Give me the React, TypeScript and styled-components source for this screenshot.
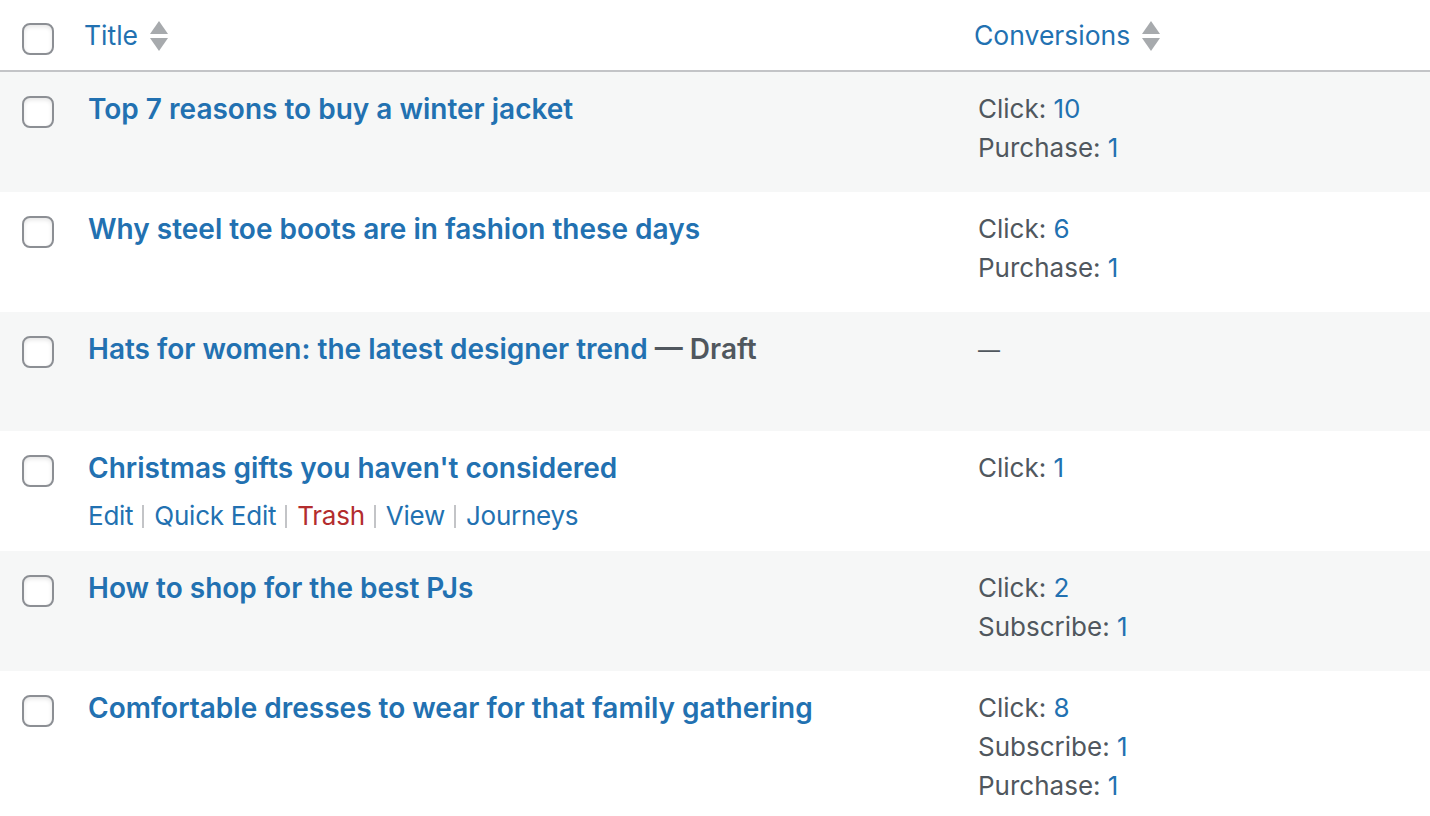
import React from 'react';
import styled, { createGlobalStyle } from 'styled-components';

const GlobalStyle = createGlobalStyle`
  html, body {
    margin: 0;
    padding: 0;
    background: #ffffff;
  }
  body {
    font-family: Inter, "Noto Sans", "Liberation Sans", sans-serif;
    color: #3c434a;
  }
`;

type Post = {
  title: string;
  draft?: boolean;
  hovered?: boolean;
  stats: { label: string; value: number }[];
};

const posts: Post[] = [
  {
    title: 'Top 7 reasons to buy a winter jacket',
    stats: [
      { label: 'Click', value: 10 },
      { label: 'Purchase', value: 1 },
    ],
  },
  {
    title: 'Why steel toe boots are in fashion these days',
    stats: [
      { label: 'Click', value: 6 },
      { label: 'Purchase', value: 1 },
    ],
  },
  { title: 'Hats for women: the latest designer trend', draft: true, stats: [] },
  {
    title: "Christmas gifts you haven't considered",
    hovered: true,
    stats: [{ label: 'Click', value: 1 }],
  },
  {
    title: 'How to shop for the best PJs',
    stats: [
      { label: 'Click', value: 2 },
      { label: 'Subscribe', value: 1 },
    ],
  },
  {
    title: 'Comfortable dresses to wear for that family gathering',
    stats: [
      { label: 'Click', value: 8 },
      { label: 'Subscribe', value: 1 },
      { label: 'Purchase', value: 1 },
    ],
  },
];

const actions = ['Edit', 'Quick Edit', 'Trash', 'View', 'Journeys'];

const Table = styled.table`
  width: 100%;
  border-collapse: collapse;
  border-spacing: 0;
  table-layout: fixed;
  font-size: 26px;
  line-height: 39px;
`;

const HeadRow = styled.tr`
  border-bottom: 2px solid #c3c4c7;
`;

const CheckHead = styled.th`
  width: 68px;
  padding: 23px 0 0 22px;
  box-sizing: border-box;
  vertical-align: top;
  text-align: left;
  height: 70px;
`;

const SortHead = styled.th<{ $width?: number }>`
  padding: 0;
  text-align: left;
  font-weight: 400;
  vertical-align: top;
  ${(p) => (p.$width ? `width: ${p.$width}px;` : '')}
`;

const SortLink = styled.a`
  display: inline-flex;
  align-items: center;
  gap: 12px;
  padding: 16px 16px 15px;
  color: #2271b1;
  text-decoration: none;
  font-size: 26.5px;
`;

const Row = styled.tr<{ $alt: boolean }>`
  background: ${(p) => (p.$alt ? '#f6f7f7' : '#ffffff')};
`;

const CheckCell = styled.th`
  padding: 24px 0 0 22px;
  vertical-align: top;
  text-align: left;
`;

const Cell = styled.td<{ $nudge?: boolean }>`
  padding: ${(p) => (p.$nudge ? '17px 20px 15px' : '16px 20px')};
  vertical-align: top;
`;

const Checkbox = styled.span`
  display: block;
  width: 32px;
  height: 32px;
  box-sizing: border-box;
  border: 2px solid #8c8f94;
  border-radius: 8px;
  background: #ffffff;
  box-shadow: inset 0 2px 4px rgba(0, 0, 0, 0.1);
`;

const TitleLine = styled.strong`
  display: block;
  font-size: 28px;
  line-height: 42px;
  font-weight: 600;
  margin-bottom: 5.8px;
`;

const TitleLink = styled.a`
  color: #2271b1;
  text-decoration: none;
`;

const State = styled.span`
  color: #50575e;
`;

const Actions = styled.div<{ $visible: boolean }>`
  display: flex;
  align-items: center;
  height: 40px;
  letter-spacing: -0.25px;
  visibility: ${(p) => (p.$visible ? 'visible' : 'hidden')};
`;

const ActionLink = styled.a<{ $danger?: boolean }>`
  color: ${(p) => (p.$danger ? '#b32d2e' : '#2271b1')};
  text-decoration: none;
`;

const Sep = styled.span`
  display: block;
  width: 2px;
  height: 23px;
  margin: 2px 10px 0 9px;
  background: #c3c4c7;
`;

const Stat = styled.div`
  color: #50575e;
`;

const StatValue = styled.a`
  color: #2271b1;
  text-decoration: none;
`;

const Dash = styled.span`
  color: #50575e;
  font-size: 22px;
`;

const SortIcon = () => (
  <svg width="18" height="30" viewBox="0 0 18 30" aria-hidden="true">
    <path d="M9 0 L18 13 L0 13 Z" fill="#a7aaad" />
    <path d="M0 17 L18 17 L9 30 Z" fill="#a7aaad" />
  </svg>
);

export default function App() {
  return (
    <>
      <GlobalStyle />
      <Table>
        <thead>
          <HeadRow>
            <CheckHead>
              <Checkbox />
            </CheckHead>
            <SortHead>
              <SortLink>
                Title <SortIcon />
              </SortLink>
            </SortHead>
            <SortHead $width={472}>
              <SortLink>
                Conversions <SortIcon />
              </SortLink>
            </SortHead>
          </HeadRow>
        </thead>
        <tbody>
          {posts.map((post, i) => (
            <Row key={post.title} $alt={i % 2 === 0}>
              <CheckCell>
                <Checkbox />
              </CheckCell>
              <Cell>
                <TitleLine>
                  <TitleLink>{post.title}</TitleLink>
                  {post.draft && <State> — Draft</State>}
                </TitleLine>
                <Actions $visible={!!post.hovered}>
                  {actions.map((a, j) => (
                    <React.Fragment key={a}>
                      {j > 0 && <Sep />}
                      <ActionLink $danger={a === 'Trash'}>{a}</ActionLink>
                    </React.Fragment>
                  ))}
                </Actions>
              </Cell>
              <Cell $nudge>
                {post.stats.length === 0 ? (
                  <Dash>—</Dash>
                ) : (
                  post.stats.map((s) => (
                    <Stat key={s.label}>
                      {s.label}: <StatValue>{s.value}</StatValue>
                    </Stat>
                  ))
                )}
              </Cell>
            </Row>
          ))}
        </tbody>
      </Table>
    </>
  );
}
